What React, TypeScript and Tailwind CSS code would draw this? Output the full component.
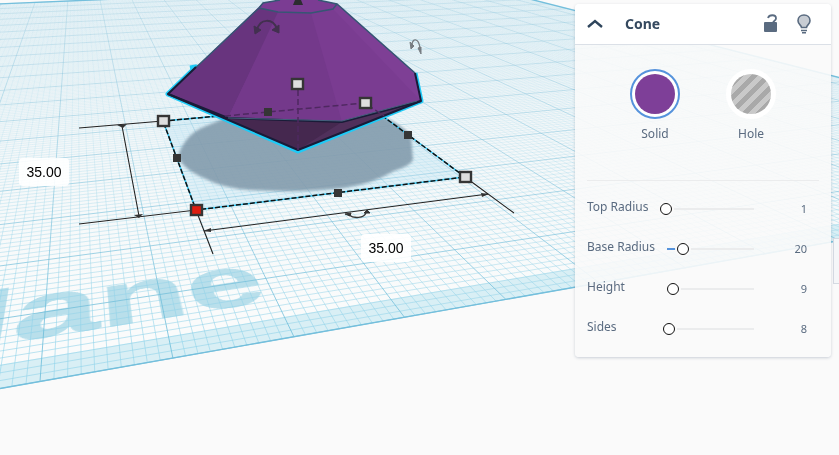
import { useState } from "react";

type Point = [number, number];

type Parameter = {
  id: string;
  label: string;
  min: number;
  max: number;
  value: number;
};

const parameters: Parameter[] = [
  { id: "top-radius", label: "Top Radius", min: 1, max: 250, value: 1 },
  { id: "base-radius", label: "Base Radius", min: 0, max: 97, value: 20 },
  { id: "height", label: "Height", min: 0, max: 105, value: 9 },
  { id: "sides", label: "Sides", min: 3, max: 138, value: 8 },
];

// Camera: both families of grid lines vanish on the horizon.
const HORIZON = -116;
const VANISH_X = 76.4;
const VANISH_SIDE = 2862;
const SLOPE_0 = -0.35;
const SLOPE_STEP = 0.2768;
const DEPTH_0 = 0.001982;
const DEPTH_STEP = 0.000318;
const SCALE = 1 - VANISH_X / VANISH_SIDE;

const LEFT = -5;
const RIGHT = 15.5;
const BACK = 20;

// One unit is ten millimetres on the workplane.
function project(k: number, t: number): Point {
  const m = SLOPE_0 + SLOPE_STEP * k;
  const w = DEPTH_0 + DEPTH_STEP * t + m / VANISH_SIDE;
  return [VANISH_X + (m * SCALE) / w, HORIZON + SCALE / w];
}

function segment(a: Point, b: Point) {
  return `M${a[0].toFixed(1)} ${a[1].toFixed(1)}L${b[0].toFixed(1)} ${b[1].toFixed(1)}`;
}

function toPoints(points: Point[]) {
  return points.map((p) => p.join(",")).join(" ");
}

function range(from: number, to: number) {
  return Array.from({ length: to - from + 1 }, (_, i) => from + i);
}

const isMajor = (n: number) => n % 10 === 0;
const lengthwise = range(LEFT * 10, RIGHT * 10);
const crosswise = range(0, BACK * 10);

function gridPath(major: boolean) {
  return [
    ...lengthwise
      .filter((n) => isMajor(n) === major)
      .map((n) => segment(project(n / 10, 0), project(n / 10, BACK))),
    ...crosswise
      .filter((n) => isMajor(n) === major)
      .map((n) => segment(project(LEFT, n / 10), project(RIGHT, n / 10))),
  ].join("");
}

// 3D matrix that lays an element (100px = one unit) flat on the workplane.
function floorMatrix(k: number, t: number) {
  const m0 = SLOPE_0 + SLOPE_STEP * k;
  const mx = SLOPE_STEP / 100;
  const w0 = DEPTH_0 + DEPTH_STEP * t + m0 / VANISH_SIDE;
  const wx = mx / VANISH_SIDE;
  const wy = -DEPTH_STEP / 100;
  const column = (m: number, c: number, w: number) => [
    (VANISH_X * w + SCALE * m) / w0,
    (HORIZON * w + SCALE * c) / w0,
    0,
    w / w0,
  ];
  return `matrix3d(${[
    ...column(mx, 0, wx),
    ...column(0, 0, wy),
    ...[0, 0, 1, 0],
    ...column(m0, 1, w0),
  ]
    .map((v) => v.toFixed(9))
    .join(",")})`;
}

const plane = [
  project(LEFT, 0),
  project(RIGHT, 0),
  project(RIGHT, BACK),
  project(LEFT, BACK),
];
const border = [
  project(LEFT, 0),
  project(RIGHT, 0),
  project(RIGHT, 0.31),
  project(LEFT, 0.31),
];

const cornerHandles: Point[] = [
  [163, 121],
  [297, 84],
  [365, 103],
  [465, 177],
  [196, 210],
];
const edgeHandles: Point[] = [
  [268, 112],
  [177, 158],
  [408, 135],
  [338, 193],
];

function Workplane() {
  return (
    <div className="absolute inset-0 overflow-hidden">
      <svg className="absolute inset-0 h-full w-full" aria-hidden="true">
        <defs>
          <linearGradient id="floor" gradientUnits="userSpaceOnUse" x1="0" y1="0" x2="0" y2="300">
            <stop offset="0" stopColor="#edf4f7" />
            <stop offset="1" stopColor="#fafbfb" />
          </linearGradient>
        </defs>
        <polygon points={toPoints(plane)} fill="url(#floor)" />
        <polygon points={toPoints(border)} fill="#d9eff5" />
      </svg>

      <p
        className="absolute top-0 left-0 origin-top-left font-['Liberation_Sans',sans-serif] text-[128px] leading-none font-bold text-[#b9dfeb] [-webkit-text-stroke:1px_#b9dfeb]"
        style={{ transform: floorMatrix(0.39, 1.68) }}
      >
        lane
      </p>

      <svg className="absolute inset-0 h-full w-full" aria-hidden="true">
        <defs>
          <linearGradient id="minor" gradientUnits="userSpaceOnUse" x1="0" y1="0" x2="0" y2="340">
            <stop offset="0" stopColor="#8fd0e6" stopOpacity="0.06" />
            <stop offset="0.4" stopColor="#8fd0e6" stopOpacity="0.18" />
            <stop offset="0.75" stopColor="#8fd0e6" stopOpacity="0.42" />
            <stop offset="1" stopColor="#8fd3ea" stopOpacity="0.6" />
          </linearGradient>
          <linearGradient id="major" gradientUnits="userSpaceOnUse" x1="0" y1="0" x2="0" y2="340">
            <stop offset="0" stopColor="#86c2da" stopOpacity="0.3" />
            <stop offset="1" stopColor="#6bbcd9" stopOpacity="0.8" />
          </linearGradient>
        </defs>
        <path d={gridPath(false)} fill="none" stroke="url(#minor)" />
        <path d={gridPath(true)} fill="none" stroke="url(#major)" />
        <polygon points={toPoints(plane)} fill="none" stroke="#74bfdc" strokeWidth="1.4" />
      </svg>
    </div>
  );
}

function Shape() {
  return (
    <svg className="absolute inset-0 h-full w-full" role="img" aria-label="Cone">
      <defs>
        <filter id="soft">
          <feGaussianBlur stdDeviation="1.6" />
        </filter>
      </defs>

      {/* SHADOW AND FOOTPRINT */}
      <polygon points="163,121 365,103 465,177 196,210" fill="#a8dcf0" fillOpacity="0.28" />
      <path
        d="M178 157C182 142 192 131 206 126L240 112L370 112Q400 122 411 136L413 160Q410 166 394 171Q372 184 344 188Q300 193 250 190Q222 188 206 179Q184 170 178 157Z"
        fill="#8199aa"
        fillOpacity="0.88"
        filter="url(#soft)"
      />
      <path d="M163 121L365 103L465 177L196 210Z" fill="none" stroke="#2cc4f2" strokeWidth="1.5" />
      <path
        d="M163 121L365 103L465 177L196 210Z"
        fill="none"
        stroke="#111"
        strokeWidth="1.5"
        strokeDasharray="5 2"
      />

      {/* BODY */}
      <path
        d="M190 68L196 67L168 94L298 151L421 101L415 73"
        fill="none"
        stroke="#1ecbf7"
        strokeWidth="5"
        strokeLinejoin="round"
      />
      <polygon points="168,94 228,118 342,122 421,101 298,150" fill="#45284f" />
      <polygon points="342,122 421,101 298,150" fill="#50305b" />
      <polygon points="263,3 280,0 318,0 337,4 415,73 421,101 342,122 228,118 168,94" fill="#7a3c91" />
      <polygon points="263,3 259,8 168,94 228,118 279,12" fill="#68347e" />
      <polygon points="263,3 280,0 318,0 337,4 333,9 311,13 278,12 259,8" fill="#7b3c93" />
      <polygon points="278,12 311,13 342,122 228,118" fill="#74398b" />
      <polygon points="333,9 337,4 415,73 421,101" fill="#7e3f95" />
      <path
        d="M168 94L259 8L263 3L280 0M318 0L337 4L415 73M259 8L278 12L311 13L333 9L337 4"
        fill="none"
        stroke="#365674"
        strokeWidth="1.5"
      />
      <path
        d="M196 67L168 94L298 150L421 101L415 73"
        fill="none"
        stroke="#191c38"
        strokeWidth="2"
        strokeLinejoin="round"
      />
      <path d="M168 94L228 118L342 122L421 101" fill="none" stroke="#191c38" strokeWidth="2" />
      <path d="M228 118L342 121L417 101" fill="none" stroke="#44607c" />
      <path
        d="M225 116L365 103L384 116M298 90V150"
        fill="none"
        stroke="#4e2860"
        strokeWidth="1.5"
        strokeDasharray="6 3"
      />

      {/* DIMENSION LINES */}
      <path
        d="M79 128L163 121M79 224L196 210L213 254M122 126L139 216M204 231L488 194M465 177L514 213"
        fill="none"
        stroke="#222"
        strokeWidth="1.1"
      />
      <path
        d="M117 125L127 124L123 128ZM134 215L143 214L139 218ZM203 231L211 228V232ZM489 194L481 193L482 197Z"
        fill="#333"
      />

      {/* ROTATE ARROWS */}
      <g fill="none" stroke="#42304f" strokeWidth="2">
        <path d="M257 30C260 18 273 18 277 29" />
        <path d="M254 26L255 34L261 30ZM279 25L279 33L272 30Z" fill="#42304f" strokeWidth="1" />
      </g>
      <g fill="none" stroke="#777d82" strokeWidth="1.3">
        <path d="M412 45C412 38 419 37 420 49" />
        <path d="M410 42L411 49L414 46ZM418 48L421 54V47Z" fill="#777d82" strokeWidth="1" />
      </g>
      <g fill="none" stroke="#333" strokeWidth="1.3">
        <path d="M349 215C354 219 364 218 366 213" />
        <path d="M345 214L351 213L350 216ZM364 213L367 210L370 213Z" fill="#333" strokeWidth="1" />
      </g>

      {/* HANDLES */}
      <path d="M295 0H301L303 5H293Z" fill="#2c2c30" />
      {edgeHandles.map(([x, y]) => (
        <rect key={`${x}-${y}`} x={x - 4} y={y - 4} width="8" height="8" fill="#353535" />
      ))}
      {cornerHandles.map(([x, y]) => (
        <rect
          key={`${x}-${y}`}
          x={x - 5}
          y={y - 5}
          width="11"
          height="10"
          fill={x === 196 ? "#dd1d10" : "#dedede"}
          stroke="#353535"
          strokeWidth="2.4"
        />
      ))}
    </svg>
  );
}

function ParameterRow({ parameter }: { parameter: Parameter }) {
  const [value, setValue] = useState(parameter.value);
  const { id, label, min, max } = parameter;
  const center = 6 + ((value - min) / (max - min)) * 82;

  return (
    <div className="flex h-10 items-center">
      <label htmlFor={id} className="w-[73px] pb-1 text-xs whitespace-nowrap">
        {label}
      </label>
      <input
        id={id}
        type="range"
        min={min}
        max={max}
        value={value}
        onChange={(event) => setValue(Number(event.target.value))}
        className="h-4 w-[94px] cursor-pointer appearance-none bg-transparent bg-size-[87px_2px] bg-position-[right_center] bg-no-repeat [&::-webkit-slider-thumb]:size-3 [&::-webkit-slider-thumb]:appearance-none [&::-webkit-slider-thumb]:rounded-full [&::-webkit-slider-thumb]:border [&::-webkit-slider-thumb]:border-[#111] [&::-webkit-slider-thumb]:bg-white [&::-webkit-slider-thumb]:shadow-[0_0_0_2px_#fafafa]"
        style={{
          backgroundImage: `linear-gradient(to right, #5693dc ${center - 7}px, #ebeced ${center - 7}px)`,
        }}
      />
      <output htmlFor={id} className="flex-1 pr-3 text-right text-[11px]">
        {value}
      </output>
    </div>
  );
}

function Inspector() {
  const [mode, setMode] = useState("solid");

  return (
    <section className="relative w-64 rounded-sm text-[#5a6b80] shadow-[0_1px_3px_rgba(60,80,110,0.25)]">
      <header className="flex h-10 items-center rounded-t-sm bg-white px-3">
        <button type="button" aria-label="Collapse" className="text-[#2f455c]">
          <svg width="16" height="10" viewBox="0 0 16 10" fill="none" className="block">
            <path d="M1 8L8 2L15 8" stroke="currentColor" strokeWidth="2.4" />
          </svg>
        </button>
        <h2 className="ml-[22px] flex-1 text-sm font-bold text-[#35495f]">Cone</h2>
        <div className="flex items-center gap-5 pr-2">
          <button type="button" aria-label="Lock">
            <svg width="14" height="20" viewBox="0 0 14 20" fill="none" className="block">
              <rect x="1" y="8" width="13" height="10" rx="1" fill="currentColor" />
              <path d="M5 4C6 0.500 13 0 13 4.5C13 7 10 6.500 10 9" stroke="currentColor" strokeWidth="1.8" />
            </svg>
          </button>
          <button type="button" aria-label="Hide">
            <svg width="14" height="20" viewBox="0 0 14 20" fill="none" className="block">
              <path
                d="M4.500 13.500C4.500 11 1 10.500 1 6.700C1 3.300 3.600 1 7 1S13 3.300 13 6.700C13 10.500 9.500 11 9.500 13.500Z"
                fill="#c7ccd3"
                stroke="currentColor"
                strokeWidth="1.6"
              />
              <path d="M4 16.500H10M5 18.700H9" stroke="currentColor" strokeWidth="1.400" />
            </svg>
          </button>
        </div>
      </header>

      <div className="rounded-b-sm border-t border-[#dbe0e7] bg-[#fafafa]/90 px-3 pt-6 pb-2">
        <div className="flex justify-center gap-[46px] pb-[38px]">
          <button
            type="button"
            aria-pressed={mode === "solid"}
            onClick={() => setMode("solid")}
            className="flex flex-col items-center gap-[7px] text-xs"
          >
            <span
              className={`flex size-[50px] items-center justify-center rounded-full border-2 bg-white ${
                mode === "solid" ? "border-[#5693dc]" : "border-white"
              }`}
            >
              <span className="size-10 rounded-full bg-[#7e3f98]" />
            </span>
            Solid
          </button>
          <button
            type="button"
            aria-pressed={mode === "hole"}
            onClick={() => setMode("hole")}
            className="flex flex-col items-center gap-[7px] text-xs"
          >
            <span
              className={`flex size-[50px] items-center justify-center rounded-full border-2 bg-white ${
                mode === "hole" ? "border-[#5693dc]" : "border-white"
              }`}
            >
              <span className="size-10 rounded-full bg-[repeating-linear-gradient(135deg,#c9c9c9_0px,#c9c9c9_5px,#a9a9a9_5px,#a9a9a9_10px)]" />
            </span>
            Hole
          </button>
        </div>

        <div className="border-t border-[#ebeced] pt-2">
          {parameters.map((parameter) => (
            <ParameterRow key={parameter.id} parameter={parameter} />
          ))}
        </div>
      </div>
    </section>
  );
}

export default function App() {
  return (
    <main className="relative flex min-h-screen items-start justify-end overflow-hidden bg-[#fafafa] pt-1 pr-2 font-['Noto_Sans',sans-serif]">
      <Workplane />
      <Shape />

      {/* DIMENSIONS */}
      <input
        aria-label="Depth"
        defaultValue="35.00"
        className="absolute top-[158px] left-[19px] h-7 w-[50px] rounded-sm bg-white/90 text-center font-['Liberation_Sans',sans-serif] text-sm text-black"
      />
      <input
        aria-label="Width"
        defaultValue="35.00"
        className="absolute top-[234px] left-[361px] h-7 w-[50px] rounded-sm bg-white/90 text-center font-['Liberation_Sans',sans-serif] text-sm text-black"
      />

      <button
        type="button"
        aria-label="Toggle panel"
        className="absolute top-[238px] right-0 h-[46px] w-1.5 border border-r-0 border-[#d5dae2] bg-[#f5f6f8]"
      />

      <Inspector />
    </main>
  );
}
